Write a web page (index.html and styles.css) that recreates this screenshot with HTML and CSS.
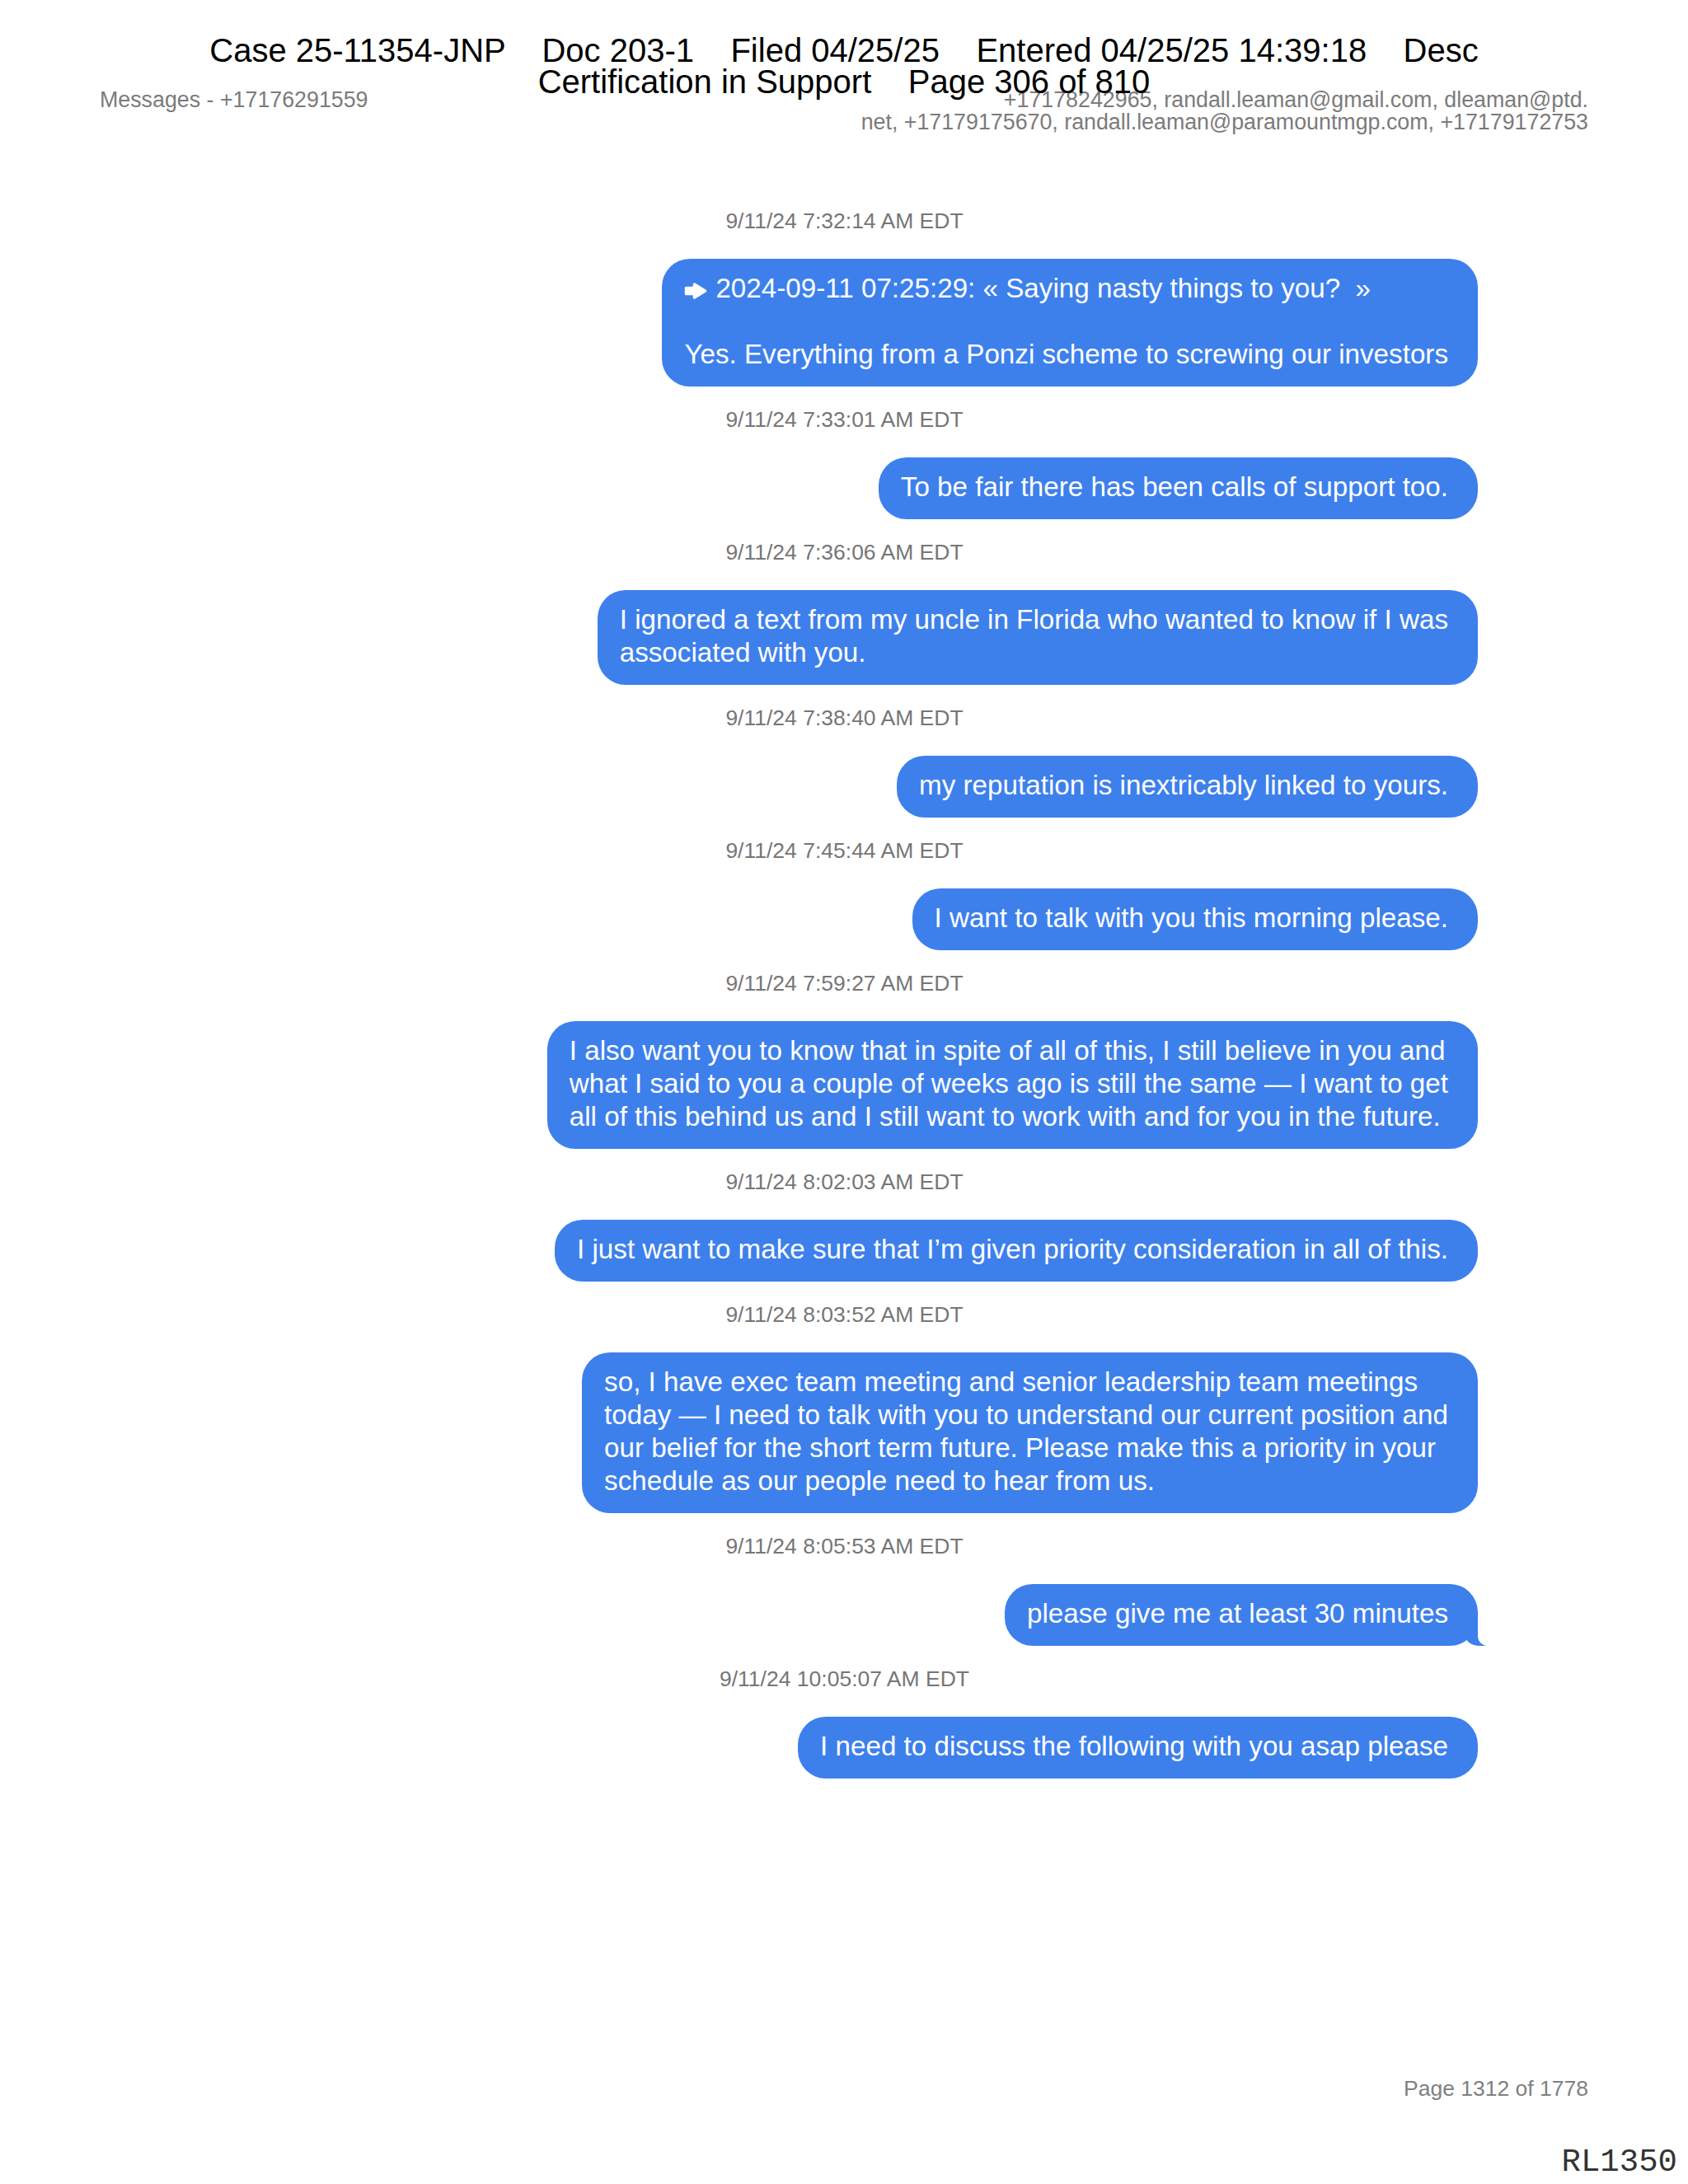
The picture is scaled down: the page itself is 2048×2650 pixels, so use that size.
FILE: index.html
```html
<!DOCTYPE html>
<html lang="en">
<head>
<meta charset="utf-8">
<title>Messages - +17176291559</title>
<link rel="stylesheet" href="styles.css">
</head>
<body>
<div class="page">
  <div class="stamp">Case 25-11354-JNP    Doc 203-1    Filed 04/25/25    Entered 04/25/25 14:39:18    Desc
Certification in Support    Page 306 of 810</div>

  <header class="topbar">
    <div class="title">Messages - +17176291559</div>
    <div class="participants">+17178242965, randall.leaman@gmail.com, dleaman@ptd.<br>net, +17179175670, randall.leaman@paramountmgp.com, +17179172753</div>
  </header>

  <main class="chat">
    <div class="msg">
      <div class="ts">9/11/24 7:32:14 AM EDT</div>
      <div class="bubble"><svg class="reply-icon" viewBox="0 0 28 20" width="28" height="20" aria-hidden="true"><path d="M2.5 6.5 H12.5 V2 L25.5 10 L12.5 18 V13.5 H2.5 Z" fill="#fff" stroke="#fff" stroke-width="3.5" stroke-linejoin="round"/></svg>2024-09-11 07:25:29: « Saying nasty things to you? &nbsp;»<br><br>Yes. Everything from a Ponzi scheme to screwing our investors</div>
    </div>
    <div class="msg">
      <div class="ts">9/11/24 7:33:01 AM EDT</div>
      <div class="bubble">To be fair there has been calls of support too.</div>
    </div>
    <div class="msg">
      <div class="ts">9/11/24 7:36:06 AM EDT</div>
      <div class="bubble">I ignored a text from my uncle in Florida who wanted to know if I was<br>associated with you.</div>
    </div>
    <div class="msg">
      <div class="ts">9/11/24 7:38:40 AM EDT</div>
      <div class="bubble">my reputation is inextricably linked to yours.</div>
    </div>
    <div class="msg">
      <div class="ts">9/11/24 7:45:44 AM EDT</div>
      <div class="bubble">I want to talk with you this morning please.</div>
    </div>
    <div class="msg">
      <div class="ts">9/11/24 7:59:27 AM EDT</div>
      <div class="bubble">I also want you to know that in spite of all of this, I still believe in you and<br>what I said to you a couple of weeks ago is still the same — I want to get<br>all of this behind us and I still want to work with and for you in the future.</div>
    </div>
    <div class="msg">
      <div class="ts">9/11/24 8:02:03 AM EDT</div>
      <div class="bubble">I just want to make sure that I’m given priority consideration in all of this.</div>
    </div>
    <div class="msg">
      <div class="ts">9/11/24 8:03:52 AM EDT</div>
      <div class="bubble">so, I have exec team meeting and senior leadership team meetings<br>today — I need to talk with you to understand our current position and<br>our belief for the short term future. Please make this a priority in your<br>schedule as our people need to hear from us.</div>
    </div>
    <div class="msg">
      <div class="ts">9/11/24 8:05:53 AM EDT</div>
      <div class="bubble tail">please give me at least 30 minutes</div>
    </div>
    <div class="msg">
      <div class="ts">9/11/24 10:05:07 AM EDT</div>
      <div class="bubble">I need to discuss the following with you asap please</div>
    </div>
  </main>

  <footer class="footer">Page 1312 of 1778</footer>
  <div class="bates">RL1350</div>
</div>
</body>
</html>
```

FILE: styles.css
```css
html, body {
  margin: 0;
  padding: 0;
  background: #ffffff;
}

body {
  font-family: "Liberation Sans", Arial, Helvetica, sans-serif;
}

.page {
  position: relative;
  width: 2048px;
  min-height: 2650px;
  box-sizing: border-box;
  padding: 108px 121px 101px 121px;
  display: flex;
  flex-direction: column;
}

.stamp {
  position: absolute;
  top: 42px;
  left: 0;
  right: 0;
  text-align: center;
  white-space: pre;
  font-size: 40px;
  line-height: 38px;
  color: #000000;
  z-index: 2;
}

.topbar {
  display: flex;
  justify-content: space-between;
  align-items: flex-start;
  font-size: 26.8px;
  line-height: 27px;
  color: #7b7b7b;
}

.participants {
  text-align: right;
}

.chat {
  display: flex;
  flex-direction: column;
  padding: 66px 134px 0 135px;
}

.msg {
  display: flex;
  flex-direction: column;
}

.ts {
  margin: 25px 0 31px;
  text-align: center;
  font-size: 26.5px;
  line-height: 30px;
  color: #767676;
}

.bubble {
  position: relative;
  align-self: flex-end;
  max-width: 1220px;
  box-sizing: border-box;
  padding: 16px 36px 19px 27px;
  border-radius: 34px;
  background: #3d80ec;
  color: #ffffff;
  font-size: 33.2px;
  line-height: 40px;
}

.reply-icon {
  display: inline-block;
  width: 28px;
  height: 20px;
  margin-right: 10px;
  vertical-align: -2px;
}

.tail::before {
  content: "";
  position: absolute;
  right: -10px;
  bottom: 0;
  width: 26px;
  height: 34px;
  background: #3d80ec;
  border-bottom-left-radius: 18px 14px;
}

.tail::after {
  content: "";
  position: absolute;
  right: -30px;
  bottom: 0;
  width: 30px;
  height: 34px;
  background: #ffffff;
  border-bottom-left-radius: 12px;
}

.footer {
  margin-top: auto;
  text-align: right;
  font-size: 26.5px;
  line-height: 30px;
  color: #808080;
}

.bates {
  position: absolute;
  right: 13px;
  bottom: 6px;
  font-family: "Liberation Mono", "Courier New", monospace;
  font-size: 39px;
  line-height: 40px;
  color: #333333;
}
```
